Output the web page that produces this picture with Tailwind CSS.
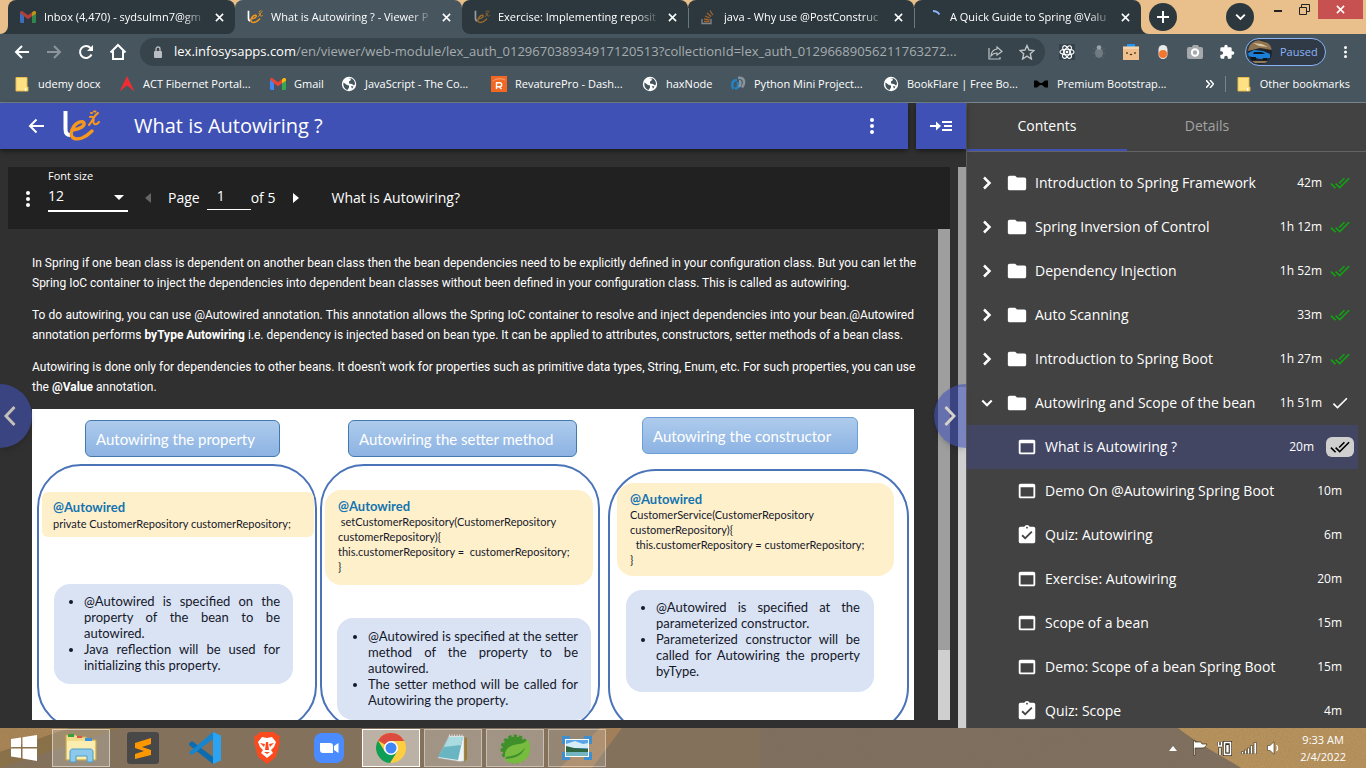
<!DOCTYPE html>
<html lang="en">
<head>
<meta charset="utf-8">
<meta name="viewport" content="width=device-width, initial-scale=1">
<title>What is Autowiring ? - Viewer</title>
<script src="https://cdn.jsdelivr.net/npm/@tailwindcss/browser@4"></script>
</head>
<body class="flex h-screen flex-col overflow-hidden bg-[#303030] font-['Open_Sans',sans-serif] text-white">

<svg class="hidden" aria-hidden="true">
  <symbol id="gmail" viewBox="0 0 24 18"><path fill="#4285f4" d="M0 2v14a2 2 0 0 0 2 2h4V6z"/><path fill="#34a853" d="M18 18h4a2 2 0 0 0 2-2V2l-6 4z"/><path fill="#ea4335" d="M0 2.500C0 .3 2.500-.6 4.300.8L12 6.500 19.700.8C21.500-.6 24 .3 24 2.500L18 8l-6 4.500L6 8z"/><path fill="#fbbc04" d="M18 8V2.100L19.700.8C21.500-.6 24 .3 24 2.500V4z"/></symbol>
  <symbol id="lex" viewBox="0 0 38 32"><path d="M3.500 1v18c0 4 1 6 4.500 6" fill="none" stroke="#fff" stroke-width="4"/><path d="M11 20c7-1 12-4 11-7s-9-1-12 7c-3 9 4 10 10 8 4-1.500 7-4 10-7" fill="none" stroke="#f7981d" stroke-width="3.400" stroke-linecap="round"/><path d="M28 7c3-1 4 1 3.500 4s2 5 5.500 1M36 3c-4 2-5 8-9 12M32 1.500h1.500M29 3h1" fill="none" stroke="#f7981d" stroke-width="2" stroke-linecap="round"/></symbol>
  <symbol id="x" viewBox="0 0 10 10"><path d="M1 1l8 8M9 1L1 9" stroke="currentColor" stroke-width="1.700" fill="none"/></symbol>
  <symbol id="globe" viewBox="0 0 16 16"><circle cx="8" cy="8" r="7.200" fill="#fff"/><path fill="#44545d" d="M2.500 6.500L6 9l2 .5v2L6.500 14C3.500 13 1.800 10 2.500 6.500zM7 2.500h3l-.5 2L8 5.500v2l3 .5 2 1.500 1-1.500C14 5 12 2.500 9.500 2zM10 10l2.500.5-1.500 2.300z"/></symbol>
  <symbol id="bmfolder" viewBox="0 0 13 15"><path fill="#ffe083" stroke="#e5bc4a" d="M.5.500h11v9.500h1v4H.5z"/><path fill="#fff" d="M9.500 11h1.200v3H9.500z"/></symbol>
  <symbol id="dots" viewBox="0 0 4 16"><circle cx="2" cy="2" r="2"/><circle cx="2" cy="8" r="2"/><circle cx="2" cy="14" r="2"/></symbol>
  <symbol id="folder" viewBox="0 0 24 24"><path d="M10 4H4c-1.100 0-1.990.9-1.990 2L2 18c0 1.100.9 2 2 2h16c1.100 0 2-.9 2-2V8c0-1.100-.9-2-2-2h-8z"/></symbol>
  <symbol id="right" viewBox="0 0 10 14"><path d="M2 1.500L7.500 7 2 12.500" fill="none" stroke="currentColor" stroke-width="2.500"/></symbol>
  <symbol id="down" viewBox="0 0 14 10"><path d="M1.500 2L7 7.500 12.500 2" fill="none" stroke="currentColor" stroke-width="2.500"/></symbol>
  <symbol id="doneall" viewBox="0 0 24 24"><path d="M18 7l-1.410-1.410-6.340 6.340 1.410 1.410zm4.240-1.410L11.660 16.170 7.480 12l-1.410 1.410L11.660 19l12-12zM.41 13.410L6 19l1.410-1.410L1.830 12z"/></symbol>
  <symbol id="done" viewBox="0 0 24 24"><path d="M9 16.200L4.800 12l-1.400 1.400L9 19 21 7l-1.400-1.400z"/></symbol>
  <symbol id="web" viewBox="0 0 24 24"><path d="M19 4H5c-1.110 0-2 .9-2 2v12c0 1.100.89 2 2 2h14c1.100 0 2-.9 2-2V6c0-1.100-.9-2-2-2zm0 14H5V8h14z"/></symbol>
  <symbol id="quiz" viewBox="0 0 24 24"><path fill-rule="evenodd" d="M19 3h-4.180C14.400 1.840 13.300 1 12 1s-2.400.84-2.820 2H5c-1.100 0-2 .9-2 2v14c0 1.100.9 2 2 2h14c1.100 0 2-.9 2-2V5c0-1.100-.9-2-2-2zm-7 0c.55 0 1 .45 1 1s-.45 1-1 1-1-.45-1-1 .45-1 1-1zm-2 14l-4-4 1.410-1.410L10 14.170l6.590-6.590L18 9z"/></symbol>
  <symbol id="flare" viewBox="0 0 8 8"><path d="M8 0v8H0a8 8 0 0 0 8-8z"/></symbol>
</svg>

<!-- Tab strip -->
<header class="shrink-0 bg-[#46555e]">
  <div class="flex h-[34px] items-start bg-[#e9c08c] pl-2 text-[11px]">
    <div class="relative flex h-[34px] w-[227px] items-center rounded-t-lg bg-[#2d383e] pr-[7px] pl-3">
      <svg class="absolute bottom-0 -left-2 size-2 fill-[#2d383e]"><use href="#flare"/></svg>
      <svg class="mr-2 h-3 w-4 shrink-0 opacity-70"><use href="#gmail"/></svg>
      <span class="flex-1 overflow-hidden whitespace-nowrap [mask-image:linear-gradient(to_right,black_85%,transparent)]">Inbox (4,470) - sydsulmn7@gm</span>
      <button class="ml-1 p-1" aria-label="Close tab"><svg class="size-[9px]"><use href="#x"/></svg></button>
    </div>
    <div class="relative z-10 flex h-[34px] w-[227px] items-center rounded-t-lg bg-[#46555e] pr-[7px] pl-3">
      <svg class="absolute bottom-0 -left-2 size-2 fill-[#46555e]"><use href="#flare"/></svg>
      <svg class="absolute -right-2 bottom-0 size-2 -scale-x-100 fill-[#46555e]"><use href="#flare"/></svg>
      <svg class="mr-2 h-4 w-4 shrink-0"><use href="#lex"/></svg>
      <span class="flex-1 overflow-hidden whitespace-nowrap [mask-image:linear-gradient(to_right,black_85%,transparent)]">What is Autowiring ? - Viewer P</span>
      <button class="ml-1 p-1" aria-label="Close tab"><svg class="size-[9px]"><use href="#x"/></svg></button>
    </div>
    <div class="flex h-[34px] w-[226px] items-center rounded-t-lg bg-[#2d383e] pr-[7px] pl-3">
      <svg class="mr-2 h-4 w-4 shrink-0 opacity-50"><use href="#lex"/></svg>
      <span class="flex-1 overflow-hidden whitespace-nowrap [mask-image:linear-gradient(to_right,black_85%,transparent)]">Exercise: Implementing reposit</span>
      <button class="ml-1 p-1" aria-label="Close tab"><svg class="size-[9px]"><use href="#x"/></svg></button>
    </div>
    <div class="relative flex h-[34px] w-[226px] items-center rounded-t-lg bg-[#2d383e] pr-[7px] pl-3">
      <span class="absolute top-2 left-0 h-5 w-px bg-[#6b777e]"></span>
      <svg class="mr-2 size-4 shrink-0 opacity-60" viewBox="0 0 16 16" fill="none"><path d="M2 10v4.500h9V10" stroke="#bcbbbb" stroke-width="1.300"/><path d="M4 12.500h5.500M4.200 10l5.400.8M5 7l5 2M7 4l4.200 3.500M10 1.500l2.800 4.500" stroke="#f48024" stroke-width="1.300"/></svg>
      <span class="flex-1 overflow-hidden whitespace-nowrap [mask-image:linear-gradient(to_right,black_85%,transparent)]">java - Why use @PostConstruc</span>
      <button class="ml-1 p-1" aria-label="Close tab"><svg class="size-[9px]"><use href="#x"/></svg></button>
    </div>
    <div class="relative flex h-[34px] w-[227px] items-center rounded-t-lg bg-[#2d383e] pr-[7px] pl-3">
      <span class="absolute top-2 left-0 h-5 w-px bg-[#6b777e]"></span>
      <svg class="absolute -right-2 bottom-0 size-2 -scale-x-100 fill-[#2d383e]"><use href="#flare"/></svg>
      <svg class="mr-2 size-4 shrink-0" viewBox="0 0 16 16" fill="none"><path d="M7 2c3 0 5 1.200 6.500 3.500" stroke="#8ab4f8" stroke-width="1.800"/></svg>
      <span class="flex-1 overflow-hidden whitespace-nowrap [mask-image:linear-gradient(to_right,black_85%,transparent)]">A Quick Guide to Spring @Valu</span>
      <button class="ml-1 p-1" aria-label="Close tab"><svg class="size-[9px]"><use href="#x"/></svg></button>
    </div>
    <button class="mt-[3px] ml-2 flex size-7 items-center justify-center rounded-full bg-[#2d383e]" aria-label="New tab"><svg class="size-3" viewBox="0 0 12 12"><path d="M6 0v12M0 6h12" stroke="#fff" stroke-width="2"/></svg></button>
    <div class="flex-1"></div>
    <button class="mt-[3px] mr-5 flex size-7 items-center justify-center rounded-full bg-[#2d383e]" aria-label="Search tabs"><svg class="h-2 w-[11px]"><use href="#down"/></svg></button>
    <div class="flex h-[19px]">
      <button class="flex w-[25px] items-center pt-1" aria-label="Minimize"><svg class="h-[3px] w-2" viewBox="0 0 8 3"><path d="M0 0h8v2H0z" fill="#222"/></svg></button>
      <button class="mr-2 flex items-center" aria-label="Restore"><svg class="size-[11px]" viewBox="0 0 11 11" fill="none" stroke="#222"><path d="M.5 3.500h7v7h-7z"/><path d="M2.500 3V.5h8v7H8"/></svg></button>
      <button class="mr-[3px] flex w-[45px] items-center justify-center bg-[#c75050]" aria-label="Close"><svg class="size-[9px]"><use href="#x"/></svg></button>
    </div>
  </div>

  <!-- Address bar -->
  <div class="flex h-9 items-center pl-[6px]">
    <button class="flex w-8 justify-center" aria-label="Back"><svg class="size-4" viewBox="0 0 16 16"><path d="M15 8H2M8 2L2 8l6 6" fill="none" stroke="#fff" stroke-width="2"/></svg></button>
    <button class="flex w-8 justify-center" aria-label="Forward"><svg class="size-4" viewBox="0 0 16 16"><path d="M1 8h13M8 2l6 6-6 6" fill="none" stroke="#8b959b" stroke-width="2"/></svg></button>
    <button class="flex w-8 justify-center" aria-label="Reload"><svg class="size-4" viewBox="0 0 16 16"><path d="M13.500 10.500A6 6 0 1 1 12.500 4" fill="none" stroke="#fff" stroke-width="2"/><path d="M15 1v6H9z" fill="#fff"/></svg></button>
    <button class="flex w-8 justify-center" aria-label="Home"><svg class="size-[18px]" viewBox="0 0 18 18"><path d="M1.500 9.500L9 2l7.500 7.500M4 8v8h10V8" fill="none" stroke="#fff" stroke-width="2"/></svg></button>
    <div class="ml-[6px] flex h-7 min-w-0 flex-1 items-center rounded-full bg-[#38444b] pr-[2px] pl-[14px]">
      <svg class="mr-3 h-3 w-2 shrink-0" viewBox="0 0 8 12"><rect y="5" width="8" height="7" rx="1" fill="#b8bec1"/><path d="M2 5V3a2 2 0 0 1 4 0v2" fill="none" stroke="#b8bec1" stroke-width="1.300"/></svg>
      <div class="min-w-0 flex-1 overflow-hidden text-[13px] whitespace-nowrap text-[#a5adb1]"><span class="text-white">lex.infosysapps.com</span>/en/viewer/web-module/lex_auth_012967038934917120513?collectionId=lex_auth_01296689056211763272...</div>
      <button class="flex w-8 shrink-0 justify-center" aria-label="Share"><svg class="size-[15px]" viewBox="0 0 15 15" fill="none" stroke="#bcc2c5" stroke-width="1.200"><path d="M1 3v11h11v-2"/><path d="M9 2l5 4.500L9 10V8C6 8 4.500 9 3 11c.3-4 2-6.500 6-7z"/></svg></button>
      <button class="flex w-8 shrink-0 justify-center" aria-label="Bookmark"><svg class="size-4" viewBox="0 0 16 16"><path d="M8 1.500l2 4.500 5 .5-3.700 3.200L12.400 15 8 12.200 3.600 15l1.100-5.300L1 6.500 6 6z" fill="none" stroke="#bcc2c5" stroke-width="1.400"/></svg></button>
    </div>
    <div class="ml-[6px] flex">
      <button class="flex w-8 justify-center" aria-label="React tools"><svg class="size-4" viewBox="0 0 16 16"><path fill="#35434b" d="M0 0h16v16H0z"/><g fill="none" stroke="#fff" stroke-width="1.100"><ellipse cx="8" cy="8" rx="7" ry="2.800"/><ellipse cx="8" cy="8" rx="7" ry="2.800" transform="rotate(60 8 8)"/><ellipse cx="8" cy="8" rx="7" ry="2.800" transform="rotate(120 8 8)"/></g><circle cx="8" cy="8" r="1.300" fill="#fff"/></svg></button>
      <button class="flex w-8 justify-center" aria-label="Debugger"><svg class="size-4" viewBox="0 0 16 16"><path d="M2 4l3 2M14 4l-3 2M1 9h3M15 9h-3M3 14l3-2M13 14l-3-2" stroke="#56646c"/><ellipse cx="8" cy="9" rx="4" ry="5" fill="#707a80"/><circle cx="8" cy="3.500" r="2.300" fill="#9ba3a8"/></svg></button>
      <button class="flex w-8 justify-center" aria-label="Box"><svg class="size-4" viewBox="0 0 16 16"><path fill="#2196f3" d="M4 0h8v3H4z"/><path fill="#efc08c" d="M0 2.500h16V16H0z"/><path fill="#fff" opacity=".3" d="M0 2.500h16V5H0z"/><path d="M4 8v2M12 8v2M7 10q1 1.500 2 0" stroke="#3b2a1a" fill="none" stroke-width="1.200"/></svg></button>
      <button class="flex w-8 justify-center" aria-label="Capsule"><svg class="size-4" viewBox="0 0 16 16"><rect x="3.500" y="1" width="9" height="14" rx="4.500" fill="#e9eaea"/><circle cx="8" cy="10" r="4" fill="#f4762b"/></svg></button>
      <button class="flex w-8 justify-center" aria-label="Screenshot"><svg class="size-4" viewBox="0 0 16 16"><path fill="#a5a9ab" d="M2 3h3l1-2h5l1 2h2a2 2 0 0 1 2 2v8a2 2 0 0 1-2 2H2a2 2 0 0 1-2-2V5a2 2 0 0 1 2-2z"/><circle cx="8" cy="8.500" r="3.200" fill="none" stroke="#fff" stroke-width="2"/></svg></button>
      <button class="flex w-8 justify-center" aria-label="Extensions"><svg class="size-4" viewBox="0 0 24 24"><path fill="#fff" d="M20.500 11H19V7a2 2 0 0 0-2-2h-4V3.500a2.500 2.500 0 0 0-5 0V5H4a2 2 0 0 0-2 2v3.800h1.500a2.700 2.700 0 0 1 0 5.400H2V20c0 1.100.9 2 2 2h3.800v-1.500a2.700 2.700 0 0 1 5.400 0V22H17a2 2 0 0 0 2-2v-4h1.500a2.500 2.500 0 0 0 0-5z"/></svg></button>
    </div>
    <button class="ml-[2px] flex h-7 w-[81px] items-center gap-2 rounded-full border border-[#8ab4f8] bg-[#303a47] pl-[2px] text-[11px] text-[#8ab4f8]">
      <svg class="size-6 shrink-0 rounded-full" viewBox="0 0 24 24"><path fill="#20242a" d="M0 0h24v24H0z"/><path fill="#8d7350" d="M0 3l10-3 14 4v6L12 8 0 11z"/><path fill="#d9c39a" d="M5 3l9 1 6 3-9-1z"/><path fill="#1b7fd6" d="M0 13l6-3 9 1 7 3v4l-10 1-12-3z"/><path fill="#0b1720" d="M6 12l8 0 3 2-12 0zM3 17h5v3H3zM15 18h4v2h-4z"/><path fill="#8c7a5a" d="M4 21h16v2H6z"/></svg>
      Paused</button>
    <button class="mr-[2px] flex w-[38px] justify-center" aria-label="Menu"><svg class="h-[14px] w-[3px] fill-white" viewBox="0 0 4 16"><use href="#dots"/></svg></button>
  </div>

  <!-- Bookmarks -->
  <nav class="flex h-[33px] items-center border-b border-[#77858c] pb-1 pl-[14px] text-[11px] whitespace-nowrap" aria-label="Bookmarks">
    <a href="#" class="flex w-[105px] items-center gap-2"><svg class="h-[15px] w-4"><use href="#bmfolder"/></svg>udemy docx</a>
    <a href="#" class="flex w-[151px] items-center gap-2"><svg class="size-4" viewBox="0 0 16 16"><path fill="#ee2e33" d="M8 0l7.500 15.500L8 9.500.5 15.500z"/></svg>ACT Fibernet Portal...</a>
    <a href="#" class="flex w-[71px] items-center gap-2"><svg class="h-3 w-4"><use href="#gmail"/></svg>Gmail</a>
    <a href="#" class="flex w-[150px] items-center gap-2"><svg class="size-4"><use href="#globe"/></svg>JavaScript - The Co...</a>
    <a href="#" class="flex w-[151px] items-center gap-2"><svg class="size-4" viewBox="0 0 16 16"><path fill="#f26722" d="M0 0h16v16H0z"/><path d="M5.500 13V6.800h3.200a2 2 0 0 1 0 4H6M8.500 11l2 2" fill="none" stroke="#fff" stroke-width="1.400"/><path d="M2 5C5 2.500 10 2 14 4" fill="none" stroke="#f9b795" stroke-width=".8"/></svg>RevaturePro - Dash...</a>
    <a href="#" class="flex w-[88px] items-center gap-2"><svg class="size-4"><use href="#globe"/></svg>haxNode</a>
    <a href="#" class="flex w-[153px] items-center gap-2"><svg class="size-4" viewBox="0 0 16 16" fill="none" stroke-width="2.500"><path d="M7 4C2 4 1 9 3.500 13M8 6v5l-3 2" stroke="#1f83c6"/><path d="M8 2c6-1 8 4 4 9.500M9 5c2 0 2 3 0 6" stroke="#87949b"/></svg>Python Mini Project...</a>
    <a href="#" class="flex w-[150px] items-center gap-2"><svg class="size-4"><use href="#globe"/></svg>BookFlare | Free Bo...</a>
    <a href="#" class="flex w-[150px] items-center gap-2"><svg class="size-4" viewBox="0 0 16 16"><path fill="#000" d="M1 4.500h3L7 7h2l3-2.500h3v7h-3L9 9H7l-3 2.500H1z"/></svg>Premium Bootstrap...</a>
    <button class="ml-auto" aria-label="More bookmarks"><svg class="size-2" viewBox="0 0 8 8"><path d="M0 0l3.500 4L0 8M4 0l3.500 4L4 8" fill="none" stroke="#fff" stroke-width="1.500"/></svg></button>
    <span class="mr-[10px] ml-[11px] h-4 w-px bg-[#77858c]"></span>
    <a href="#" class="mr-4 flex items-center gap-2"><svg class="h-[15px] w-4"><use href="#bmfolder"/></svg>Other bookmarks</a>
  </nav>
</header>

<div class="flex min-h-0 flex-1">
  <!-- Lesson viewer -->
  <main class="relative flex min-w-0 flex-1 flex-col">
    <div class="z-10 flex h-[46px] shrink-0 gap-2">
      <div class="flex flex-1 items-center bg-[#3f51b5] pl-7 shadow-[0_2px_5px_rgba(0,0,0,0.5)]">
        <button aria-label="Go back"><svg class="size-4" viewBox="0 0 16 16"><path d="M16 8H2M8.500 1.500L2 8l6.500 6.500" fill="none" stroke="#fff" stroke-width="2"/></svg></button>
        <svg class="ml-[18px] h-8 w-[38px]" role="img" aria-label="Lex"><use href="#lex"/></svg>
        <h1 class="ml-[34px] flex-1 text-xl">What is Autowiring ?</h1>
        <button class="mr-[34px]" aria-label="More options"><svg class="h-4 w-1 fill-white"><use href="#dots"/></svg></button>
      </div>
      <button class="flex w-[50px] items-center justify-center bg-[#3f51b5] shadow-[0_2px_5px_rgba(0,0,0,0.5)]" aria-label="Collapse contents"><svg class="h-3 w-[22px]" viewBox="0 0 22 12"><path d="M0 5h6V1.500L11 6l-5 4.500V7H0zM12 1h10v2H12zM14 5h8v2h-8zM12 9h10v2H12z" fill="#fff"/></svg></button>
    </div>
    <div class="flex min-h-0 flex-1 pt-[18px]">
      <div class="mb-2 ml-2 flex min-w-0 flex-1 flex-col">
        <div class="flex h-[62px] shrink-0 bg-[#212121] pl-[18px] text-sm">
          <button class="mt-6 flex h-4 w-1" aria-label="Page options"><svg class="h-4 w-1 fill-white"><use href="#dots"/></svg></button>
          <div class="relative ml-[18px] w-20">
            <label for="fs" class="block pt-px text-[11px] leading-4">Font size</label>
            <select id="fs" class="h-7 w-full appearance-none border-b-2 border-white bg-[#212121] pb-[2px] text-sm outline-none"><option>12</option><option>14</option></select>
            <svg class="pointer-events-none absolute top-7 right-1 h-[5px] w-[10px] fill-white" viewBox="0 0 10 5"><path d="M0 0h10L5 5z"/></svg>
          </div>
          <div class="flex h-[62px] items-center">
            <button class="ml-[17px]" aria-label="Previous page"><svg class="h-[10px] w-[6px] fill-[#666]" viewBox="0 0 6 10"><path d="M6 0v10L0 5z"/></svg></button>
            <label for="pg" class="ml-[17px]">Page</label>
            <input id="pg" value="1" class="ml-[7px] h-6 w-11 border-b border-white bg-transparent pr-4 pb-1 text-center outline-none">
            <span>of 5</span>
            <button class="ml-[18px]" aria-label="Next page"><svg class="h-[10px] w-[6px] fill-white" viewBox="0 0 6 10"><path d="M0 0v10l6-5z"/></svg></button>
            <span class="ml-8 whitespace-nowrap">What is Autowiring?</span>
          </div>
        </div>
        <div class="flex min-h-0 flex-1">
          <article class="min-w-0 flex-1 space-y-3 overflow-hidden pt-6 pr-6 pl-6 text-justify font-[Roboto,sans-serif] text-xs leading-5">
            <p><span class="block whitespace-nowrap [text-align-last:justify]">In Spring if one bean class is dependent on another bean class then the bean dependencies need to be explicitly defined in your configuration class. But you can let the</span> Spring IoC container to inject the dependencies into dependent bean classes without been defined in your configuration class. This is called as autowiring.</p>
            <p><span class="block whitespace-nowrap [text-align-last:justify]">To do autowiring, you can use @Autowired annotation. This annotation allows the Spring IoC container to resolve and inject dependencies into your bean.@Autowired</span> annotation performs <b>byType Autowiring</b> i.e. dependency is injected based on bean type. It can be applied to attributes, constructors, setter methods of a bean class.</p>
            <p><span class="block whitespace-nowrap [text-align-last:justify]">Autowiring is done only for dependencies to other beans. It doesn't work for properties such as primitive data types, String, Enum, etc. For such properties, you can use</span> the <b>@Value</b> annotation.</p>
            <figure class="flex h-[360px] items-start bg-white pl-[5px] text-left font-[Lato,sans-serif] text-[11px] leading-4 text-[#15182b]">
              <div class="w-[280px] pt-[11px]">
                <div class="ml-12 flex h-[37px] w-[195px] items-center rounded-md border border-[#4479ad] bg-linear-to-b from-[#aecbec] to-[#8cb3e3] pl-[10px] text-[15px] text-white">Autowiring the property</div>
                <div class="mt-[7px] h-[266px] rounded-[44px] border-2 border-[#4a73b8] pt-[26px]">
                  <div class="ml-[3px] h-[45px] w-[272px] rounded-md bg-[#fff0cc] pt-[7px] pl-[11px] whitespace-nowrap"><b class="text-[13px] text-[#1474b0]">@Autowired</b><br>private CustomerRepository customerRepository;</div>
                  <ul class="mt-[47px] ml-[15px] h-[100px] w-[239px] list-disc rounded-2xl bg-[#dae3f3] pt-[9px] pr-[13px] pl-[30px] text-justify text-[13px]"><li>@Autowired is specified on the property of the bean to be autowired.</li><li>Java reflection will be used for initializing this property.</li></ul>
                </div>
              </div>
              <div class="ml-[3px] w-[280px] pt-[11px]">
                <div class="ml-7 flex h-[37px] w-[229px] items-center rounded-md border border-[#4479ad] bg-linear-to-b from-[#aecbec] to-[#8cb3e3] pl-[10px] text-[15px] text-white">Autowiring the setter method</div>
                <div class="mt-[7px] h-[266px] rounded-[44px] border-2 border-[#4a73b8] pt-6">
                  <div class="ml-[3px] h-[95px] w-[268px] rounded-2xl bg-[#fff0cc] pt-[9px] pl-[13px] leading-[15px] whitespace-pre"><b class="text-[13px] text-[#1474b0]">@Autowired</b>
 setCustomerRepository(CustomerRepository
customerRepository){
this.customerRepository =  customerRepository;
}</div>
                  <ul class="mt-[33px] ml-[15px] h-[102px] w-[254px] list-disc rounded-2xl bg-[#dae3f3] pt-[10px] pr-[13px] pl-[31px] text-justify text-[13px]"><li>@Autowired is specified at the setter method of the property to be autowired.</li><li>The setter method will be called for Autowiring the property.</li></ul>
                </div>
              </div>
              <div class="ml-2 w-[301px] pt-2">
                <div class="ml-[34px] flex h-[37px] w-[216px] items-center rounded-md border border-[#6b9fd6] bg-linear-to-b from-[#aecbec] to-[#8cb3e3] pl-[10px] text-[15px] text-white">Autowiring the constructor</div>
                <div class="mt-[15px] h-[266px] rounded-[48px] border-2 border-[#4a73b8] pt-3">
                  <div class="ml-[7px] h-[93px] w-[277px] rounded-2xl bg-[#fff0cc] pt-[9px] pl-[13px] leading-[15px] whitespace-pre"><b class="text-[13px] text-[#1474b0]">@Autowired</b>
CustomerService(CustomerRepository
customerRepository){
  this.customerRepository = customerRepository;
}</div>
                  <ul class="mt-[14px] ml-4 h-[102px] w-[248px] list-disc rounded-2xl bg-[#dae3f3] pt-[9px] pr-[14px] pl-[30px] text-justify text-[13px]"><li>@Autowired is specified at the parameterized constructor.</li><li>Parameterized constructor will be called for Autowiring the property byType.</li></ul>
                </div>
              </div>
            </figure>
          </article>
          <div class="flex w-3 flex-col bg-[#cfcfcf]"><div class="h-[421px] bg-[#9e9e9e]"></div></div>
        </div>
      </div>
      <div class="ml-2 flex w-2 flex-col bg-[#cfcfcf]"><div class="h-[220px] bg-[#9e9e9e]"></div></div>
    </div>
    <button class="absolute top-[281px] left-0 flex h-16 w-8 items-center rounded-r-full bg-[#3f51b5]/60 pl-1 text-[#c4c1b8] shadow-md" aria-label="Previous resource"><svg class="h-5 w-3 -scale-x-100" viewBox="0 0 12 20"><path d="M1.500 1l8.500 9-8.500 9" fill="none" stroke="currentColor" stroke-width="3"/></svg></button>
    <button class="absolute top-[281px] right-0 flex h-16 w-8 items-center rounded-l-full bg-[#3f51b5]/60 pl-[10px] text-[#d5d2c8] shadow-md" aria-label="Next resource"><svg class="h-5 w-3" viewBox="0 0 12 20"><path d="M1.500 1l8.500 9-8.500 9" fill="none" stroke="currentColor" stroke-width="3"/></svg></button>
  </main>

  <!-- Course contents -->
  <aside class="flex w-[400px] shrink-0 flex-col overflow-hidden border-l border-[#5c5c5c] bg-[#424242] text-sm">
    <div class="flex h-[49px] shrink-0 border-b border-[#636363]">
      <button class="w-40 border-b-2 border-[#3f51b5]">Contents</button>
      <button class="w-40 border-b-2 border-transparent text-[#a3a3a3]">Details</button>
    </div>
    <ul class="pt-[9px]">
      <li class="flex h-11 items-center pr-4 pl-[15px]"><svg class="h-[14px] w-[10px]"><use href="#right"/></svg><svg class="ml-[14px] size-[22px] fill-white"><use href="#folder"/></svg><a href="#" class="ml-[7px] flex-1">Introduction to Spring Framework</a><span class="text-xs">42m</span><svg class="ml-2 size-5 fill-[#12a312]"><use href="#doneall"/></svg></li>
      <li class="flex h-11 items-center pr-4 pl-[15px]"><svg class="h-[14px] w-[10px]"><use href="#right"/></svg><svg class="ml-[14px] size-[22px] fill-white"><use href="#folder"/></svg><a href="#" class="ml-[7px] flex-1">Spring Inversion of Control</a><span class="text-xs">1h 12m</span><svg class="ml-2 size-5 fill-[#12a312]"><use href="#doneall"/></svg></li>
      <li class="flex h-11 items-center pr-4 pl-[15px]"><svg class="h-[14px] w-[10px]"><use href="#right"/></svg><svg class="ml-[14px] size-[22px] fill-white"><use href="#folder"/></svg><a href="#" class="ml-[7px] flex-1">Dependency Injection</a><span class="text-xs">1h 52m</span><svg class="ml-2 size-5 fill-[#12a312]"><use href="#doneall"/></svg></li>
      <li class="flex h-11 items-center pr-4 pl-[15px]"><svg class="h-[14px] w-[10px]"><use href="#right"/></svg><svg class="ml-[14px] size-[22px] fill-white"><use href="#folder"/></svg><a href="#" class="ml-[7px] flex-1">Auto Scanning</a><span class="text-xs">33m</span><svg class="ml-2 size-5 fill-[#12a312]"><use href="#doneall"/></svg></li>
      <li class="flex h-11 items-center pr-4 pl-[15px]"><svg class="h-[14px] w-[10px]"><use href="#right"/></svg><svg class="ml-[14px] size-[22px] fill-white"><use href="#folder"/></svg><a href="#" class="ml-[7px] flex-1">Introduction to Spring Boot</a><span class="text-xs">1h 27m</span><svg class="ml-2 size-5 fill-[#12a312]"><use href="#doneall"/></svg></li>
      <li class="flex h-11 items-center pr-4 pl-[14px]"><svg class="h-[10px] w-3"><use href="#down"/></svg><svg class="ml-[13px] size-[22px] fill-white"><use href="#folder"/></svg><a href="#" class="ml-[7px] flex-1">Autowiring and Scope of the bean</a><span class="text-xs">1h 51m</span><svg class="ml-2 size-5 fill-white"><use href="#done"/></svg></li>
      <li class="mr-2 flex h-11 items-center bg-[#424663] pr-1 pl-[49px]"><svg class="size-[22px] fill-white"><use href="#web"/></svg><a href="#" class="ml-[7px] flex-1">What is Autowiring ?</a><span class="text-xs">20m</span><span class="ml-3 flex h-5 w-7 items-center justify-center rounded-md bg-[#cfcfcf]"><svg class="size-5 fill-black"><use href="#doneall"/></svg></span></li>
      <li class="flex h-11 items-center pr-6 pl-[49px]"><svg class="size-[22px] fill-white"><use href="#web"/></svg><a href="#" class="ml-[7px] flex-1">Demo On @Autowiring Spring Boot</a><span class="text-xs">10m</span></li>
      <li class="flex h-11 items-center pr-6 pl-[49px]"><svg class="size-[22px] fill-white"><use href="#quiz"/></svg><a href="#" class="ml-[7px] flex-1">Quiz: Autowiring</a><span class="text-xs">6m</span></li>
      <li class="flex h-11 items-center pr-6 pl-[49px]"><svg class="size-[22px] fill-white"><use href="#web"/></svg><a href="#" class="ml-[7px] flex-1">Exercise: Autowiring</a><span class="text-xs">20m</span></li>
      <li class="flex h-11 items-center pr-6 pl-[49px]"><svg class="size-[22px] fill-white"><use href="#web"/></svg><a href="#" class="ml-[7px] flex-1">Scope of a bean</a><span class="text-xs">15m</span></li>
      <li class="flex h-11 items-center pr-6 pl-[49px]"><svg class="size-[22px] fill-white"><use href="#web"/></svg><a href="#" class="ml-[7px] flex-1">Demo: Scope of a bean Spring Boot</a><span class="text-xs">15m</span></li>
      <li class="flex h-11 items-center pr-6 pl-[49px]"><svg class="size-[22px] fill-white"><use href="#quiz"/></svg><a href="#" class="ml-[7px] flex-1">Quiz: Scope</a><span class="text-xs">4m</span></li>
    </ul>
  </aside>
</div>

<!-- Taskbar -->
<footer class="relative flex h-10 shrink-0 items-center bg-[#75614a]">
  <svg class="absolute inset-0 size-full" viewBox="0 0 1366 40" preserveAspectRatio="none" aria-hidden="true">
    <filter id="sand"><feTurbulence type="fractalNoise" baseFrequency=".7" numOctaves="2"/><feColorMatrix values="0 0 0 0 .2  0 0 0 0 .15  0 0 0 0 .1  .9 0 0 0 -.3"/></filter>
    <path fill="#84725c" d="M0 0h1366v40H0z"/><path fill="#a98555" d="M0 0h70L0 24z"/><path fill="#8a7148" d="M0 24L70 0h50L0 40z"/><path fill="#a5815a" d="M560 40l40-40h22l-30 40z"/><path fill="#7f6f5e" d="M760 0h430l50 40H760z"/><path fill="#b8935c" d="M1178 0h188v40h-125c-15-10-40-22-63-40z"/>
    <path filter="url(#sand)" d="M0 0h1366v40H0z" opacity=".5"/>
  </svg>
  <div class="relative flex items-center gap-1">
    <button class="flex h-10 w-12 items-center justify-center" aria-label="Start"><svg class="size-[26px]" viewBox="0 0 26 26"><path fill="#fff" d="M0 4l10-1.500V12H0zM11.500 2.300L26 0v12H11.500zM0 13.500h10V23L0 21.500zM11.500 13.500H26V26l-14.500-2.500z"/></svg></button>
    <button class="flex h-[38px] w-[58px] items-center justify-center border border-white/50 bg-white/20" aria-label="File Explorer"><svg class="size-8" viewBox="0 0 32 32"><path fill="#f1dc8a" stroke="#c9a94d" d="M1 3h10l2 2h8l2 3h8v20H1z"/><path fill="#3a9b46" d="M3 2h6v3H3z"/><path fill="#d9534f" d="M12 4h5v2h-5z"/><path fill="#3d8fe0" d="M20 6h7v3h-7z"/><path fill="#fbedb0" d="M2 9h28v18H2z"/><path fill="#8cc9ea" stroke="#4b9cc9" d="M5 30V20c0-2 1-3 3-3h17c2 0 3 1 3 3v10h-6v-6H11v6z"/></svg></button>
    <button class="flex h-[38px] w-[58px] items-center justify-center" aria-label="Sublime Text"><svg class="size-8" viewBox="0 0 32 32"><rect width="32" height="32" rx="3" fill="#484848"/><path fill="#ff9800" d="M8 11l16-5v6l-9 3 9 3v5L8 27v-5l9-3-9-3z"/></svg></button>
    <button class="flex h-[38px] w-[58px] items-center justify-center" aria-label="Visual Studio Code"><svg class="size-8" viewBox="0 0 32 32"><path fill="#0b6cb0" d="M0 11.500L3 9l21 16v7L0 13z"/><path fill="#1585cf" d="M0 20.500L24 0v7L3 23z"/><path fill="#2ba3f2" d="M24 0l8 3.500v25L24 32z"/></svg></button>
    <button class="flex h-[38px] w-[58px] items-center justify-center" aria-label="Brave"><svg class="h-8 w-7" viewBox="0 0 28 32"><path fill="#fb4a1d" d="M7 0h14l3 3 3 1-1 4 1 2-4 15-9 7-9-7L1 10l1-2-1-4 3-1z"/><path fill="#fff" d="M9 5l5 1 5-1 4 5-2 5-3 3 2 3-6 5-6-5 2-3-3-3-2-5z"/><path fill="#fb4a1d" d="M7 11l5 1-1 3zM21 11l-5 1 1 3zM13 10h2l1 8h-4zM11 20h6l-3 2z"/></svg></button>
    <button class="flex h-[38px] w-[58px] items-center justify-center" aria-label="Zoom"><svg class="size-[30px]" viewBox="0 0 30 30"><rect width="30" height="30" rx="8" fill="#4a8cff"/><path fill="#fff" d="M6 10h10a3 3 0 0 1 3 3v7H9a3 3 0 0 1-3-3zM20 13l4.500-3v10L20 17z"/></svg></button>
    <button class="flex h-[38px] w-[58px] items-center justify-center border border-white bg-white/45" aria-label="Chrome"><svg class="size-[30px]" viewBox="0 0 30 30"><circle cx="15" cy="15" r="15" fill="#ffcd40"/><path fill="#dd4b3e" d="M15 15L2 7.500a15 15 0 0 1 26 0L28.400 8H15z"/><path fill="#0f9d58" d="M2 7.500A15 15 0 0 0 14 30l7.500-12L15 15l-6.200 3.500z"/><circle cx="15" cy="15" r="7" fill="#fff"/><circle cx="15" cy="15" r="5.500" fill="#4285f4"/></svg></button>
    <button class="flex h-[38px] w-[58px] items-center justify-center border border-white/40 bg-white/25" aria-label="Notepad"><svg class="h-7 w-8" viewBox="0 0 32 28"><path fill="#9b7a35" d="M26 3l4 1v21l-3 3z"/><path fill="#eef4f4" stroke="#aaa" stroke-width=".5" d="M12 2h15v25l-4 .5L1 24z"/><path fill="#69b5c2" d="M12 3h14l-5 23L1 23z"/><path fill="#a9dbe1" d="M12 3h14l-2 8L7 13z"/><path stroke="#ddd" stroke-width="2" stroke-dasharray="1 1.500" d="M12 1.500h15"/></svg></button>
    <button class="flex h-[38px] w-[58px] items-center justify-center border border-white/40 bg-white/25" aria-label="Spring"><svg class="size-[31px]" viewBox="0 0 31 31"><circle cx="15" cy="16" r="12.500" fill="#3f8f2b" stroke="#3f8f2b" stroke-width="4" stroke-dasharray="3.200 2"/><path fill="#77bc3f" d="M28 6c4 9 3 22-10 24-6 1-12-1-14-4 9 0 19-3 21-12-4 7-11 9-20 10C4 15 11 12 19 11c4-.5 7-2 9-5z"/></svg></button>
    <button class="flex h-[38px] w-[58px] items-center justify-center border border-white/40 bg-white/15" aria-label="Photo viewer"><svg class="h-6 w-[30px]" viewBox="0 0 30 24"><path fill="none" stroke="#3e8ed0" stroke-width="4" d="M2 8V2h6M22 2h6v6M28 16v6h-6M8 22H2v-6"/><path fill="#fff" d="M3 3h24v18H3z"/><path fill="#5aa5e6" d="M4 4h22v9H4z"/><path fill="#d5ecfa" d="M4 8l9-3 8 3 5-1v5H4z"/><path fill="#2d6640" d="M4 10l8 2 14 1v3H4z"/><path fill="#74b5c4" d="M4 16h22v4H4z"/></svg></button>
  </div>
  <div class="relative ml-auto flex items-center">
    <svg class="h-[5px] w-2" viewBox="0 0 8 5"><path d="M4 0l4 5H0z" fill="#fff"/></svg>
    <svg class="ml-4 h-4 w-[15px]" viewBox="0 0 15 16"><path stroke="#3b3020" stroke-width=".7" fill="#fff" d="M.5.500H2V2h6l1 2h5c-1 2-2 4-5 4H2v7.500H.5z"/></svg>
    <svg class="ml-[9px] h-4 w-[15px]" viewBox="0 0 15 16"><g fill="none" stroke="#3b3020" stroke-width="3.200"><path d="M7.500 2.500h6v12h-6zM3 8v7M1 6h4M1.500 2v4M4.500 2v4"/></g><path fill="#fff" d="M8.500 4h4v9.500h-4z"/><g fill="none" stroke="#fff" stroke-width="1.600"><path d="M7.500 2.500h6v12h-6zM3 8v7M1 6h4M1.500 2v4M4.500 2v4"/></g><path fill="none" stroke="#3b3020" d="M8.800 4.500h3.400v8.500H8.800z"/></svg>
    <svg class="ml-[9px] h-3 w-4" viewBox="0 0 16 12"><path fill="#fff" stroke="#3b3020" stroke-width=".6" d="M.5 9.500h2V12h-2zM3.500 8h2v4h-2zM6.500 6h2v6h-2zM9.500 3.500h2V12h-2zM13 .500h2.500V12H13z"/></svg>
    <svg class="ml-[10px] h-[14px] w-3" viewBox="0 0 12 14"><path fill="#fff" stroke="#3b3020" stroke-width=".6" d="M.5 4.500H3L7 .8v12.400L3 9.500H.5z"/><path d="M9.500 4q2 3 0 6" stroke="#fff" stroke-width="1.300" fill="none"/></svg>
    <time class="mr-5 ml-[21px] text-center text-[11px] leading-[17px]">9:33 AM<br>2/4/2022</time>
  </div>
</footer>
</body>
</html>
